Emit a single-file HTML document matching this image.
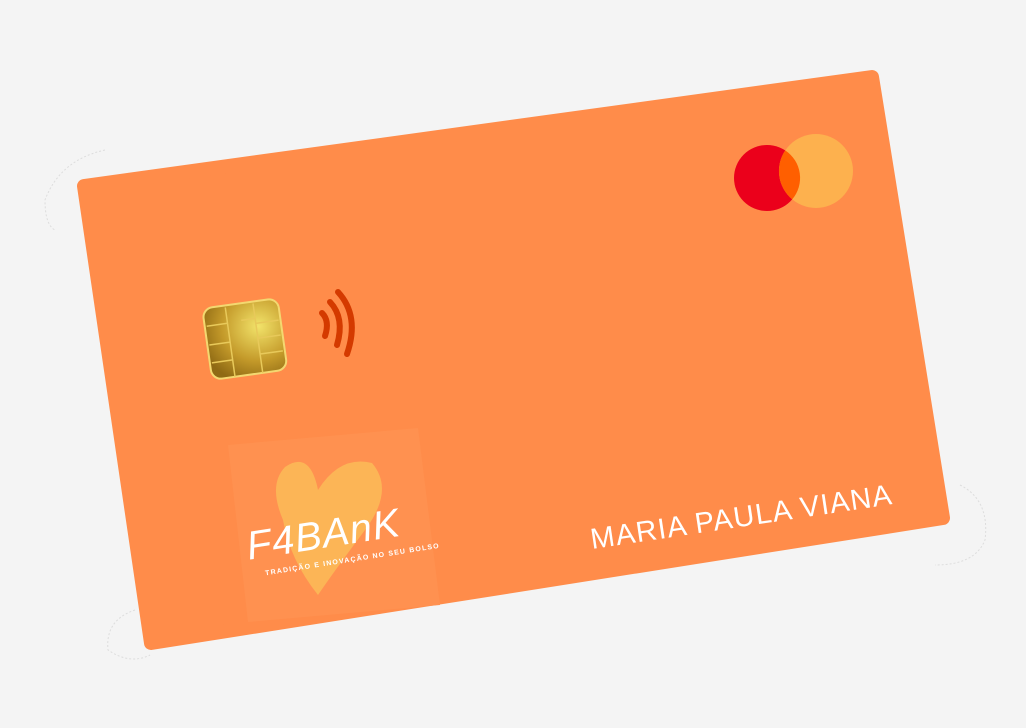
<!DOCTYPE html>
<html><head><style>
html,body{margin:0;padding:0;background:#f4f4f4;width:1026px;height:728px;overflow:hidden}
</style></head><body>
<svg width="1026" height="728" viewBox="0 0 1026 728" xmlns="http://www.w3.org/2000/svg">
<defs>
<radialGradient id="g" cx="0.7" cy="0.35" r="0.8">
<stop offset="0" stop-color="#f2e36a"/><stop offset="0.6" stop-color="#c49a2a"/><stop offset="1" stop-color="#8f6a14"/>
</radialGradient>
</defs>
<path d="M105 150 Q60 160 45 200 Q45 225 55 230" fill="none" stroke="#ddd" stroke-width="1" stroke-dasharray="2 2"/>
<path d="M960 485 Q990 500 985 540 Q975 565 935 565" fill="none" stroke="#ddd" stroke-width="1" stroke-dasharray="2 2"/>
<path d="M135 610 Q105 620 108 650 Q130 665 150 655" fill="none" stroke="#ddd" stroke-width="1" stroke-dasharray="2 2"/>
<polygon points="84,186 872,77 943,518 151,643" fill="#ff8c4a" stroke="#ff8c4a" stroke-width="14" stroke-linejoin="round"/>
<circle cx="767" cy="178" r="33" fill="#eb001b"/>
<circle cx="816" cy="171" r="37" fill="#fdb14e"/>
<path d="M785.2 150.4 A33 33 0 0 1 792.2 199.4 A37 37 0 0 1 785.2 150.4Z" fill="#ff5f00"/>
<g transform="rotate(-8 245 340)">
<rect x="207" y="303" width="76" height="72" rx="10" fill="url(#g)" stroke="#f3d870" stroke-width="2"/>
<path d="M230 305 V375 M258 305 V375 M209 321 H230 M209 340 H230 M209 358 H230 M258 325 H281 M258 340 H281 M258 356 H281 M244 320 H258" stroke="#e8c95a" stroke-width="1.5" fill="none"/>
</g>
<g fill="none" stroke="#d43a00" stroke-width="6" stroke-linecap="round">
<path d="M322 313 Q330 321 325 336"/>
<path d="M330 302 Q345 318 337 345"/>
<path d="M338 292 Q360 316 347 354"/>
</g>
<polygon points="228,445 418,428 440,605 248,622" fill="#ff9150"/>
<path d="M285 467 Q310 450 318 490 Q340 455 372 463 Q395 490 365 530 Q335 570 318 595 Q290 560 283 520 Q268 485 285 467Z" fill="#fcb556"/>
<g transform="rotate(-9 320 510)" font-family="Liberation Sans, sans-serif" fill="#fff">
<text x="242" y="548" font-size="40" font-style="italic" letter-spacing="1">F4BAnK</text>
<text x="256" y="566" font-size="7" letter-spacing="1.2" font-weight="bold">TRADIÇÃO E INOVAÇÃO NO SEU BOLSO</text>
</g>
<text x="0" y="0" transform="translate(592,549) rotate(-8.5)" font-family="Liberation Sans, sans-serif" font-size="29" letter-spacing="1.2" fill="#fff">MARIA PAULA VIANA</text>
</svg>
</body></html>
